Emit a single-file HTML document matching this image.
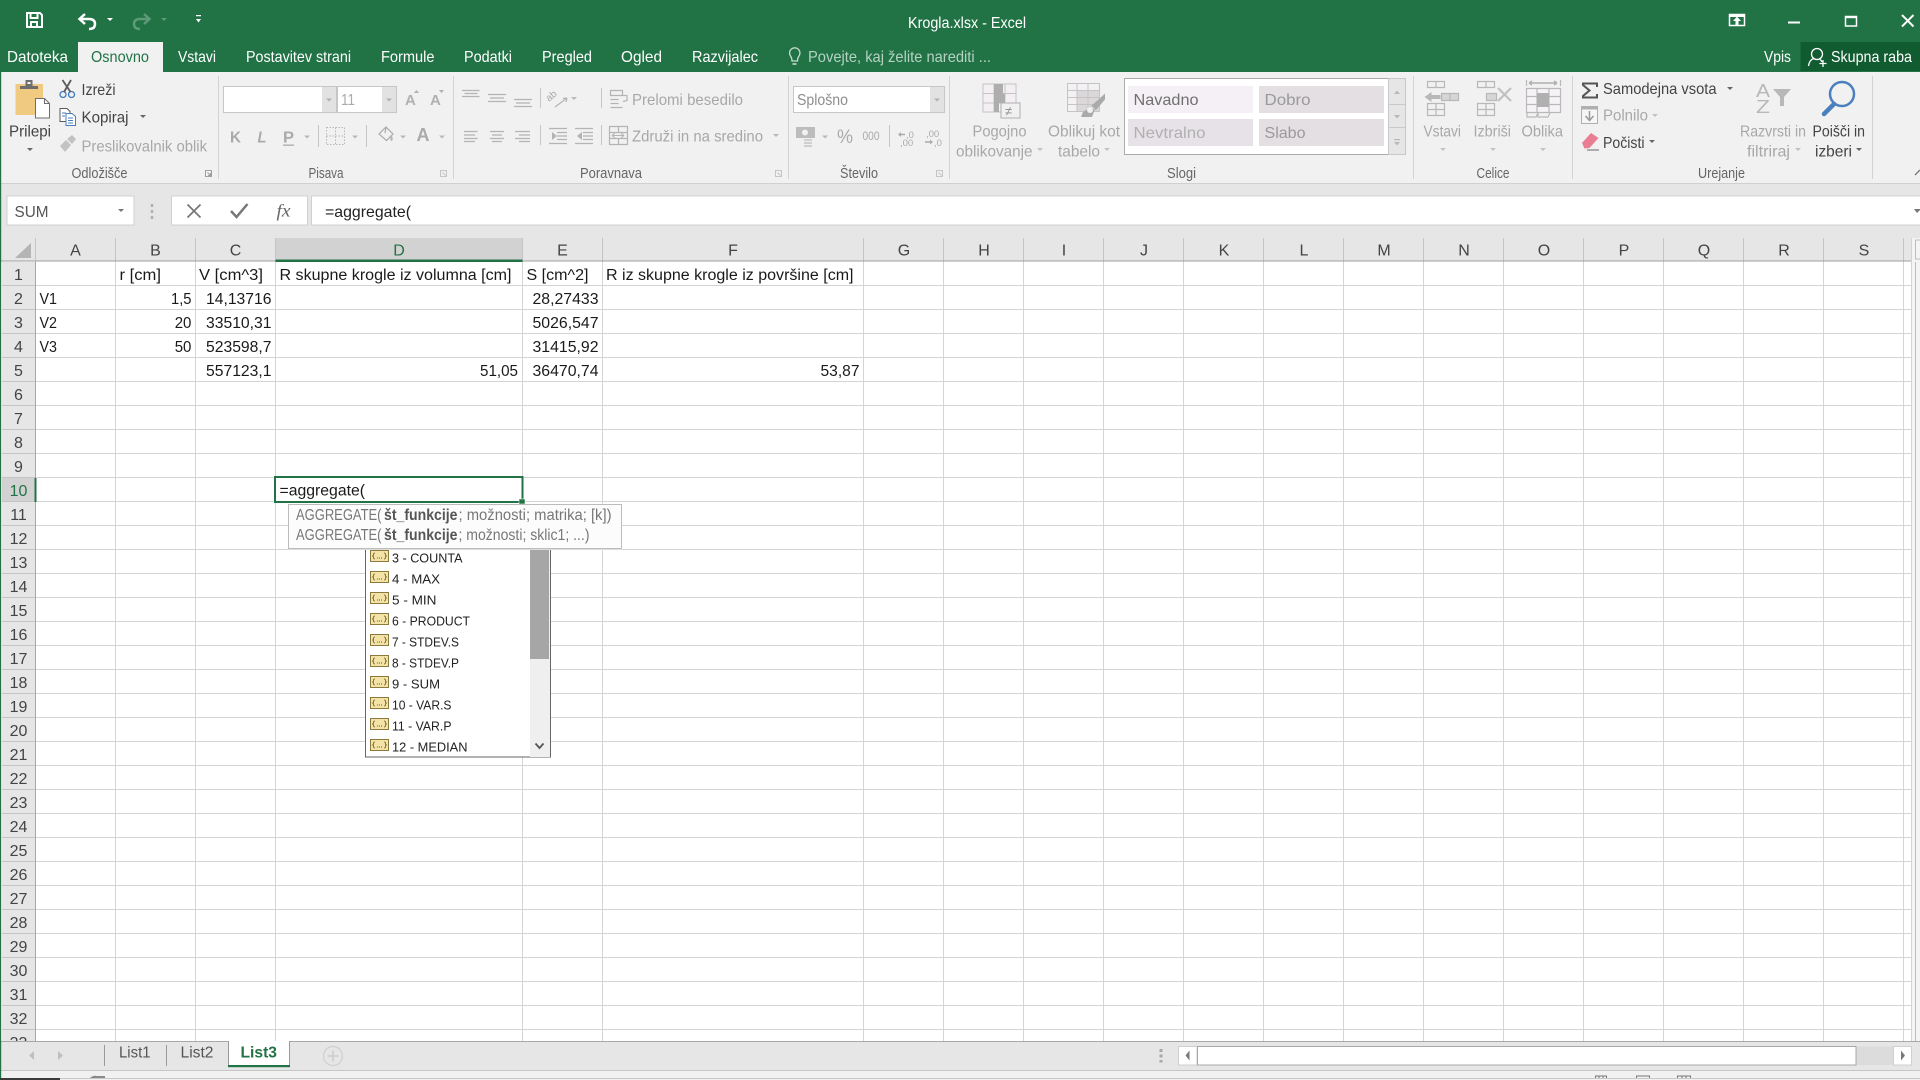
<!DOCTYPE html>
<html><head><meta charset="utf-8"><title>Krogla.xlsx - Excel</title>
<style>
html,body{margin:0;padding:0;width:1920px;height:1080px;overflow:hidden;background:#fff}
svg{display:block;position:absolute;left:0;top:0}
text{font-family:"Liberation Sans",sans-serif;white-space:pre}
.w{fill:#fff;font-size:16px}
.r{fill:#595959;font-size:16px}
.d{fill:#a8a8a8;font-size:16px}
.g{fill:#666;font-size:14.5px}
.c{fill:#1a1a1a;font-size:15.5px}
.h{fill:#444;font-size:16px;text-anchor:middle}
.n{fill:#444;font-size:16px;text-anchor:middle}
.l{fill:#222;font-size:12.5px}
.tp{fill:#777;font-size:15.5px}
.ic{fill:none;stroke:#b4b4b4;stroke-width:1.2}
.ib{fill:#b4b4b4}
</style></head><body>
<svg width="1920" height="1080" viewBox="0 0 1920 1080" xmlns="http://www.w3.org/2000/svg">
<defs>
<path id="ca" d="M0 0h6l-3 3z"/>
<g id="fn"><rect x=".5" y=".5" width="18" height="11" fill="#f3e3a6" stroke="#8b7a3c"/><path d="M5 3q-1.500 0-1.500 1.500v.8l-1 .7 1 .7v.8q0 1.500 1.500 1.500M14 3q1.500 0 1.500 1.500v.8l1 .7-1 .7v.8q0 1.500-1.500 1.500" fill="none" stroke="#6a5c2a" stroke-width=".8"/><path d="M7 8h1M9 8h1M11 8h1" stroke="#6a5c2a"/></g>
</defs>

<!-- base -->
<rect width="1920" height="1080" fill="#fff"/>
<rect width="1920" height="72" fill="#217346"/>
<rect y="72" width="1920" height="111" fill="#f1f1f1"/>
<rect y="183" width="1920" height="1" fill="#d0d0d0"/>
<rect y="184" width="1920" height="54" fill="#e6e6e6"/>

<!-- title bar -->
<g fill="none" stroke="#fff" stroke-width="2">
<path d="M27 13h13l2 2v12H27z"/><path d="M30.500 13v5h7v-5"/><path d="M31 27v-5h6v5"/>
<path d="M85 14l-5.500 5 5.500 5" stroke-width="2.500"/><path d="M80 19h9q6 0 6 5t-6 5" stroke-width="2.500"/>
</g>
<use href="#ca" x="107" y="18" fill="#fff"/>
<g fill="none" stroke="#5c9a78" stroke-width="2.500"><path d="M144 14l5.500 5-5.500 5"/><path d="M149 19h-9q-6 0-6 5t6 5"/></g>
<use href="#ca" x="161" y="18" fill="#5c9a78"/>
<path d="M196 15h5v1.200h-5zM196 19h5l-2.500 3.500z" fill="#fff"/>
<text class="w" x="908" y="28" textLength="118" lengthAdjust="spacingAndGlyphs" font-size="15">Krogla.xlsx - Excel</text>
<g fill="none" stroke="#fff" stroke-width="1.500"><rect x="1729.500" y="14.500" width="15" height="11"/><rect x="1845.500" y="16.500" width="11" height="9.500"/><path d="M1902 15l11.500 11.500M1913.500 15l-11.500 11.500" stroke-width="2"/></g>
<path d="M1733 21l4-4.500 4 4.500h-2.500v4.500h-3V21z" fill="#fff"/><rect x="1730" y="15" width="14" height="2" fill="#fff"/>
<rect x="1788" y="21.500" width="12" height="2" fill="#fff"/><rect x="1845" y="16" width="12" height="2.200" fill="#fff"/>

<!-- tabs -->
<rect x="78" y="42" width="85" height="30" fill="#f1f1f1"/>
<text class="w" x="7" y="62" textLength="61" lengthAdjust="spacingAndGlyphs">Datoteka</text>
<text x="91" y="62" fill="#217346" font-size="16" textLength="58" lengthAdjust="spacingAndGlyphs">Osnovno</text>
<text class="w" x="178" y="62" textLength="38" lengthAdjust="spacingAndGlyphs">Vstavi</text>
<text class="w" x="246" y="62" textLength="105" lengthAdjust="spacingAndGlyphs">Postavitev strani</text>
<text class="w" x="381" y="62" textLength="53.500" lengthAdjust="spacingAndGlyphs">Formule</text>
<text class="w" x="464" y="62" textLength="48" lengthAdjust="spacingAndGlyphs">Podatki</text>
<text class="w" x="542" y="62" textLength="50" lengthAdjust="spacingAndGlyphs">Pregled</text>
<text class="w" x="621" y="62" textLength="41" lengthAdjust="spacingAndGlyphs">Ogled</text>
<text class="w" x="692" y="62" textLength="66" lengthAdjust="spacingAndGlyphs">Razvijalec</text>
<g fill="none" stroke="#c4dccf" stroke-width="1.300"><path d="M792 61q0-3-1.500-5a5.200 5.200 0 1 1 8.500 0q-1.500 2-1.500 5z"/><path d="M792.500 64h4" stroke-width="1.600"/></g>
<text x="808" y="62" fill="#b5d2c2" font-size="16" textLength="183" lengthAdjust="spacingAndGlyphs">Povejte, kaj želite narediti ...</text>
<text class="w" x="1764" y="62" textLength="27" lengthAdjust="spacingAndGlyphs">Vpis</text>
<rect x="1800.500" y="42" width="119.500" height="29" fill="#105c30"/>
<g fill="none" stroke="#fff" stroke-width="1.300"><circle cx="1817" cy="54" r="5.500"/><path d="M1808.500 66q1-6.500 5.500-7.500M1820 59.500q1.500.8 2 2.500"/><path d="M1823 60v7M1819.500 63.500h7"/></g>
<text class="w" x="1831" y="62" textLength="81" lengthAdjust="spacingAndGlyphs">Skupna raba</text>

<!-- ribbon separators -->
<path d="M218.500 76v103M453.500 76v103M788.500 76v103M949.500 76v103M1413.500 76v103M1572.500 76v103M1872.500 76v103" stroke="#d2d2d2"/>

<!-- clipboard -->
<path d="M15.500 84h27.500v31H15.500z" fill="#f0ca80"/>
<path d="M20 86h18v3H20z" fill="#6e6e6e"/><path d="M25.500 80h7v6h-7z" fill="#6e6e6e"/><rect x="27.500" y="82" width="3" height="2" fill="#f1f1f1"/>
<path d="M35.500 98.500h9l5 5v14.500h-14z" fill="#fff" stroke="#6e6e6e"/><path d="M44.500 98.500v5h5" fill="none" stroke="#6e6e6e"/>
<text class="r" x="9" y="136.500" textLength="42" lengthAdjust="spacingAndGlyphs" style="fill:#444">Prilepi</text>
<use href="#ca" x="27" y="148" fill="#666"/>
<g fill="none"><circle cx="63" cy="94.500" r="3" stroke="#3f7cc0" stroke-width="1.300"/><circle cx="71.500" cy="94.500" r="3" stroke="#3f7cc0" stroke-width="1.300"/><path d="M64 92L71 80M70.500 92L62.500 80" stroke="#5a5a5a" stroke-width="1.800"/></g>
<text class="r" x="81.500" y="95" textLength="34" lengthAdjust="spacingAndGlyphs" style="fill:#444">Izreži</text>
<g fill="#fff" stroke="#5a5a5a"><path d="M60 108.500h7l3 3v10H60z"/><path d="M66 113.500h6l3.500 3v9H66z" stroke="#4a7ebb"/></g><path d="M62 113h4M62 116h3M68 118h5M68 120.500h5M68 123h5" stroke="#4a7ebb"/>
<text class="r" x="81.500" y="122.500" textLength="47" lengthAdjust="spacingAndGlyphs" style="fill:#444">Kopiraj</text>
<use href="#ca" x="140" y="115" fill="#666"/>
<path d="M60 146l6-6 5 5-6 7zM67 139l5-4 4 4-4 5z" fill="#c2c2c2"/>
<text class="d" x="81.500" y="151.500" textLength="125.500" lengthAdjust="spacingAndGlyphs">Preslikovalnik oblik</text>
<text class="g" x="71.500" y="178" textLength="56" lengthAdjust="spacingAndGlyphs">Odložišče</text>
<path d="M205.500 170.500h6v6h-6zM207.500 172.500l3 3M210.500 173v2.500H208" fill="none" stroke="#8a8a8a" stroke-width=".8"/>

<!-- font -->
<rect x="223.500" y="86.500" width="113" height="26" fill="#fff" stroke="#c6c6c6"/><rect x="322" y="87" width="14" height="25" fill="#e2e2e2"/>
<rect x="337.500" y="86.500" width="59" height="26" fill="#fff" stroke="#c6c6c6"/><rect x="382" y="87" width="14" height="25" fill="#e2e2e2"/>
<use href="#ca" x="326" y="98.500" fill="#b0b0b0"/><use href="#ca" x="386" y="98.500" fill="#b0b0b0"/>
<text x="341" y="105" font-size="15.500" fill="#ababab" textLength="14" lengthAdjust="spacingAndGlyphs">11</text>
<text x="405" y="105" font-size="15" font-weight="bold" fill="#b0b0b0">A</text><path d="M414 93l2.500-3 2.500 3z" fill="#b0b0b0"/>
<text x="430" y="105" font-size="15" font-weight="bold" fill="#b0b0b0">A</text><path d="M439 90l2.500 3 2.500-3z" fill="#b0b0b0"/>
<text x="230" y="142.500" font-size="16" font-weight="bold" fill="#aaa" textLength="11" lengthAdjust="spacingAndGlyphs">K</text>
<text x="257.500" y="142.500" font-size="16" font-weight="bold" font-style="italic" fill="#aaa" textLength="9" lengthAdjust="spacingAndGlyphs">L</text>
<text x="283" y="142.500" font-size="16" font-weight="bold" fill="#aaa" textLength="11" lengthAdjust="spacingAndGlyphs">P</text><rect x="283" y="144.500" width="11" height="1.300" fill="#aaa"/>
<use href="#ca" x="304" y="135.500" fill="#b8b8b8"/>
<path d="M318.500 125v22M366.500 125v22" stroke="#c6c6c6"/>
<path d="M326.500 127.500h18v17h-18zM335.500 127.500v17M326.500 136h18" fill="none" stroke="#b8b8b8" stroke-dasharray="1.500 1.500"/>
<use href="#ca" x="352" y="135.500" fill="#b8b8b8"/>
<path d="M379 134l7-7 7 7-6.500 6.500zM386 127l-1 6" fill="none" stroke="#ababab" stroke-width="1.200"/><path d="M391 135q3 3 1 6-3 0-1-6z" fill="#b8b8b8"/>
<use href="#ca" x="400" y="135.500" fill="#b8b8b8"/>
<text x="416.500" y="141" font-size="18" font-weight="bold" fill="#aaa" textLength="13" lengthAdjust="spacingAndGlyphs">A</text>
<use href="#ca" x="439" y="135.500" fill="#b8b8b8"/>
<text class="g" x="308.500" y="178" textLength="35" lengthAdjust="spacingAndGlyphs">Pisava</text>
<path d="M440.500 170.500h6v6h-6zM442.500 172.500l3 3" fill="none" stroke="#b8b8b8" stroke-width=".8"/>

<!-- alignment -->
<g class="ic" stroke="#b4b4b4" fill="none">
<path d="M462 90.500h17.500M464.500 93.500h13M462 96.500h17.500"/>
<path d="M488 94.500h18M490 98h14M488 101.500h18"/>
<path d="M514 99.500h18M516 103h14M514 106.500h18"/>
<path d="M464 131.500h13.500M464 135h11M464 138.500h13.500M464 141.500h11"/>
<path d="M490 131.500h14M492 135h10M490 138.500h14M492 141.500h10"/>
<path d="M515 131.500h15M519 135h11M515 138.500h15M519 141.500h11"/>
<path d="M549 128.500h18M557 132.500h10M557 136h10M557 139.500h10M549 143.500h18"/>
<path d="M575 128.500h18M583 132.500h10M583 136h10M583 139.500h10M575 143.500h18"/>
<path d="M610.500 90.500h12v5h-12zM610.500 99.500h8M610.500 103.500h8M610.500 107.500h12M623 95.500h4v5l-4 1"/>
<path d="M609.500 126.500h18v18h-18zM609.500 132.500h18M609.500 138.500h18M618.500 126.500v6M618.500 138.500v6"/>
<path d="M555 107l12-9M567 98l-4 .5M567 98l-1 4"/>
</g>
<text x="0" y="0" font-size="10" fill="#aaa" transform="translate(549 102) rotate(-40)">ab</text>
<path d="M557 136l-5-4v8zM577 136l5-4v8z" fill="#b4b4b4"/><path d="M612 135.500h12M612 135.500l3-2.500M612 135.500l3 2.500M624 135.500l-3-2.500M624 135.500l-3 2.500" stroke="#b4b4b4" fill="none"/>
<use href="#ca" x="571" y="97" fill="#b8b8b8"/>
<path d="M540.500 88v20M540.500 125v20M601.500 88v20M601.500 125v20" stroke="#c6c6c6"/>
<text class="d" x="632" y="105" textLength="111" lengthAdjust="spacingAndGlyphs">Prelomi besedilo</text>
<text class="d" x="632" y="141.500" textLength="131" lengthAdjust="spacingAndGlyphs">Združi in na sredino</text>
<use href="#ca" x="773" y="134" fill="#b8b8b8"/>
<text class="g" x="580" y="178" textLength="62" lengthAdjust="spacingAndGlyphs">Poravnava</text>
<path d="M775.500 170.500h6v6h-6zM777.500 172.500l3 3" fill="none" stroke="#b8b8b8" stroke-width=".8"/>

<!-- number -->
<rect x="793.500" y="86.500" width="151" height="26" fill="#fff" stroke="#c6c6c6"/><rect x="930" y="87" width="14" height="25" fill="#e2e2e2"/>
<use href="#ca" x="934" y="98.500" fill="#b0b0b0"/>
<text x="797" y="105" font-size="16" fill="#8e8e8e" textLength="51" lengthAdjust="spacingAndGlyphs">Splošno</text>
<rect x="796" y="127" width="19" height="11" fill="#bcbcbc"/><circle cx="805" cy="132.500" r="3" fill="#f1f1f1"/><path d="M804 140h8M804 143h8M804 146h8" stroke="#c4c4c4" stroke-width="1.500"/>
<use href="#ca" x="822" y="135.500" fill="#b8b8b8"/>
<text x="837" y="143" font-size="19" fill="#aaa" textLength="16" lengthAdjust="spacingAndGlyphs">%</text>
<text x="862.500" y="140" font-size="11.500" fill="#aaa" textLength="17" lengthAdjust="spacingAndGlyphs">000</text>
<path d="M889.500 125v22" stroke="#c6c6c6"/>
<text x="906" y="138" font-size="9.500" fill="#aaa">,0</text><text x="900" y="146" font-size="9.500" fill="#aaa">,00</text><path d="M898 134.500l3-2.500v1.800h4v1.400h-4v1.800z" fill="#aaa"/>
<text x="926" y="137" font-size="9.500" fill="#aaa">,00</text><text x="934" y="146" font-size="9.500" fill="#aaa">,0</text><path d="M933 142l-3-2.500v1.800h-5v1.400h5v1.800z" fill="#aaa"/>
<text class="g" x="840" y="178" textLength="38" lengthAdjust="spacingAndGlyphs">Število</text>
<path d="M936.500 170.500h6v6h-6zM938.500 172.500l3 3" fill="none" stroke="#b8b8b8" stroke-width=".8"/>

<!-- conditional -->
<rect x="983" y="84" width="33" height="28" fill="#f3eff3" stroke="#c4c4c4"/>
<path d="M994 84v28M1005 84v28M983 93.500h33M983 103h33" stroke="#c4c4c4" fill="none"/>
<path d="M994 84h9v10h-9zM994 94h11v9h-11zM994 103h5v9h-5z" fill="#aeaeae"/>
<rect x="1001" y="103" width="19" height="15" fill="#f1f1f1" stroke="#aeaeae"/>
<text x="1005" y="115.500" font-size="13" fill="#8e8e8e">≠</text>
<text class="d" x="972.500" y="136.500" textLength="54" lengthAdjust="spacingAndGlyphs">Pogojno</text>
<text class="d" x="956" y="156.500" textLength="76.500" lengthAdjust="spacingAndGlyphs">oblikovanje</text>
<use href="#ca" x="1037" y="148" fill="#c2c2c2"/>
<rect x="1067.500" y="83.500" width="32" height="28" fill="#f3f1f3" stroke="#c4c4c4"/>
<rect x="1077" y="90" width="22" height="21" fill="#dcd8da"/>
<path d="M1067.500 90.500h32M1067.500 97.500h32M1067.500 104.500h32M1077 83.500v28M1088 83.500v28" stroke="#c4c4c4" fill="none"/>
<path d="M1099 99l6-5.500v6L1096 110l-6-3zM1092 106l-9 6-2 5h11l3-8z" fill="#aaa"/><circle cx="1090" cy="110" r="3" fill="#f1f1f1"/>
<text class="d" x="1048" y="136.500" textLength="72" lengthAdjust="spacingAndGlyphs">Oblikuj kot</text>
<text class="d" x="1058" y="156.500" textLength="42" lengthAdjust="spacingAndGlyphs">tabelo</text>
<use href="#ca" x="1104" y="148" fill="#c2c2c2"/>

<!-- styles -->
<rect x="1124.500" y="78.500" width="281" height="76" fill="#fff" stroke="#ababab"/>
<rect x="1128" y="86" width="125" height="27" fill="#f5f0f5"/>
<rect x="1259" y="86" width="125" height="27" fill="#e4dfe3"/>
<rect x="1128" y="119" width="125" height="27" fill="#e7e2e7"/>
<rect x="1259" y="119" width="125" height="27" fill="#e4dfe3"/>
<text x="1133.500" y="105" font-size="16" fill="#707070" textLength="65" lengthAdjust="spacingAndGlyphs">Navadno</text>
<text x="1264.500" y="105" font-size="16" fill="#9a9a9a" textLength="46" lengthAdjust="spacingAndGlyphs">Dobro</text>
<text x="1133.500" y="138" font-size="16" fill="#b0b0b0" textLength="72" lengthAdjust="spacingAndGlyphs">Nevtralno</text>
<text x="1264.500" y="138" font-size="16" fill="#9a9a9a" textLength="41" lengthAdjust="spacingAndGlyphs">Slabo</text>
<rect x="1388.500" y="78.500" width="17" height="76" fill="#e6e6e6" stroke="#c8c8c8"/><path d="M1388.500 104.500h17M1388.500 127.500h17" stroke="#c8c8c8"/>
<path d="M1394 94l3-3.500 3 3.500zM1394 115h6l-3 3.500zM1394 140h6M1394 142h6l-3 3.500z" fill="#b8b8b8" stroke="none"/><rect x="1394" y="139" width="6" height="1.200" fill="#b8b8b8"/>
<text class="g" x="1167" y="178" textLength="29" lengthAdjust="spacingAndGlyphs">Slogi</text>

<!-- cells -->
<g fill="none" stroke="#b8b8b8" stroke-width="1.200">
<path d="M1427.500 81.500h17v6h-17zM1436 81.500v6"/><path d="M1441.500 93.500h17v7h-17zM1450 93.500v7" fill="#d6d6d6"/><path d="M1427.500 103.500h17v12h-17zM1436 103.500v12M1427.500 109.500h17"/>
<path d="M1477.500 81.500h17v6h-17zM1486 81.500v6"/><path d="M1486.500 93.500h10v7h-10z" fill="#d6d6d6"/><path d="M1477.500 103.500h17v12h-17zM1486 103.500v12M1477.500 109.500h17"/>
<path d="M1498 88l13 13M1511 88l-13 13" stroke-width="2.200" stroke="#c0c0c0"/>
<path d="M1526.500 88.500h34v24h-34zM1537 88.500v24M1549 88.500v24M1526.500 96.500h34M1526.500 104.500h34" fill="#f6f3f6"/><path d="M1527 113v4h9l2-4M1538 113v4h10l2-4"/>
<path d="M1526.500 80v6M1560.500 80v6"/><path d="M1529 83h28M1529 83l3-2M1529 83l3 2M1557 83l-3-2M1557 83l-3 2" stroke-width="1.500" stroke="#b0b0b0"/>
</g>
<path d="M1424.500 97l7-5v3h9v4h-9v3z" fill="#b8b8b8"/>
<rect x="1537" y="93" width="12" height="14" fill="#b0b0b0"/>
<text class="d" x="1423.500" y="136.500" textLength="37.500" lengthAdjust="spacingAndGlyphs">Vstavi</text>
<text class="d" x="1473.500" y="136.500" textLength="37.500" lengthAdjust="spacingAndGlyphs">Izbriši</text>
<text class="d" x="1521.500" y="136.500" textLength="41.500" lengthAdjust="spacingAndGlyphs">Oblika</text>
<use href="#ca" x="1440" y="148" fill="#c2c2c2"/><use href="#ca" x="1490" y="148" fill="#c2c2c2"/><use href="#ca" x="1540" y="148" fill="#c2c2c2"/>
<text class="g" x="1476.500" y="178" textLength="33" lengthAdjust="spacingAndGlyphs">Celice</text>

<!-- editing -->
<path d="M1597 87v-3.500h-14v1.500l6.500 5.500-6.500 5.500v1.500h14V94" fill="none" stroke="#555" stroke-width="2"/>
<text class="r" x="1603" y="94" textLength="113.500" lengthAdjust="spacingAndGlyphs" style="fill:#444">Samodejna vsota</text>
<use href="#ca" x="1727" y="87" fill="#666"/>
<rect x="1581.500" y="106.500" width="16" height="17" fill="#f6f6f6" stroke="#b0b0b0"/><rect x="1581.500" y="106.500" width="16" height="3" fill="#b0b0b0"/><path d="M1589.500 111v9M1585.500 116l4 4.500 4-4.500" fill="none" stroke="#9a9a9a" stroke-width="1.500"/>
<text class="d" x="1603" y="120.500" textLength="45" lengthAdjust="spacingAndGlyphs">Polnilo</text>
<use href="#ca" x="1652" y="114" fill="#c2c2c2"/>
<path d="M1582 143l9-10 7.500 5-9 10-5 .5z" fill="#e87d93"/><path d="M1587 150h12" stroke="#666"/>
<text class="r" x="1603" y="148" textLength="41.500" lengthAdjust="spacingAndGlyphs" style="fill:#444">Počisti</text>
<use href="#ca" x="1649" y="140" fill="#666"/>
<text x="1756" y="97" font-size="18" fill="#b8b8b8" textLength="14" lengthAdjust="spacingAndGlyphs">A</text>
<text x="1756" y="113" font-size="18" fill="#b8b8b8" textLength="14" lengthAdjust="spacingAndGlyphs">Z</text>
<path d="M1773 89h18l-7 8v9h-4v-9z" fill="#b8b8b8"/>
<text class="d" x="1740" y="136.500" textLength="66" lengthAdjust="spacingAndGlyphs">Razvrsti in</text>
<text class="d" x="1747" y="156.500" textLength="43" lengthAdjust="spacingAndGlyphs">filtriraj</text>
<use href="#ca" x="1795" y="148" fill="#c2c2c2"/>
<circle cx="1842" cy="94" r="12" fill="none" stroke="#4a80bd" stroke-width="2.500"/>
<path d="M1834 104l-10 10" stroke="#4a80bd" stroke-width="4.500" stroke-linecap="round"/>
<text class="r" x="1812.500" y="136.500" textLength="52.500" lengthAdjust="spacingAndGlyphs" style="fill:#444">Poišči in</text>
<text class="r" x="1815" y="156.500" textLength="37" lengthAdjust="spacingAndGlyphs" style="fill:#444">izberi</text>
<use href="#ca" x="1856" y="148" fill="#666"/>
<text class="g" x="1698" y="178" textLength="47" lengthAdjust="spacingAndGlyphs">Urejanje</text>
<path d="M1915 175l5-5" stroke="#777" stroke-width="1.300"/>

<!-- formula bar -->
<rect x="7" y="196" width="127" height="29" fill="#fff" stroke="#d0d0d0"/>
<text x="14.500" y="217" font-size="16" fill="#555" textLength="34" lengthAdjust="spacingAndGlyphs">SUM</text>
<use href="#ca" x="118" y="209" fill="#777"/>
<path d="M152 204v3M152 210v3M152 216v3" stroke="#b0b0b0" stroke-width="2.500"/>
<rect x="171.500" y="196" width="136" height="29" fill="#fff" stroke="#d0d0d0"/>
<rect x="311.500" y="196" width="1610" height="29" fill="#fff" stroke="#d0d0d0"/>
<path d="M187.500 204.500l13 13M200.500 204.500l-13 13" stroke="#777" stroke-width="1.800" fill="none"/>
<path d="M231 211l5.500 6 11-13" stroke="#777" stroke-width="2.500" fill="none"/>
<text x="276.500" y="216.500" font-size="18" font-style="italic" fill="#666" style="font-family:'Liberation Serif',serif" textLength="14" lengthAdjust="spacingAndGlyphs">fx</text>
<text x="325" y="217" font-size="16" fill="#222" textLength="86" lengthAdjust="spacingAndGlyphs">=aggregate(</text>
<path d="M1914 209h6v1l-3 3z" fill="#777"/>

<!-- headers -->
<rect y="238" width="1912" height="23" fill="#e6e6e6"/>
<rect x="275.500" y="238" width="247" height="23" fill="#d2d2d2"/>
<rect x="2" y="262" width="34" height="779" fill="#e6e6e6"/>
<rect x="2" y="478" width="34" height="24" fill="#d2d2d2"/>
<path d="M31 243v15H15z" fill="#b4b4b4"/>
<path d="M35.500 238v24M115.500 238v24M195.500 238v24M275.500 238v24M522.500 238v24M602.500 238v24M863.500 238v24M943.500 238v24M1023.500 238v24M1103.500 238v24M1183.500 238v24M1263.500 238v24M1343.500 238v24M1423.500 238v24M1503.500 238v24M1583.500 238v24M1663.500 238v24M1743.500 238v24M1823.500 238v24M1903.500 238v24" stroke="#c4c4c4"/>
<rect y="260.500" width="1912" height="1" fill="#9f9f9f"/>
<rect x="275.500" y="259.500" width="247" height="2.500" fill="#217346"/>

<!-- grid -->
<path d="M115.500 262V1041M195.500 262V1041M275.500 262V1041M522.500 262V1041M602.500 262V1041M863.500 262V1041M943.500 262V1041M1023.500 262V1041M1103.500 262V1041M1183.500 262V1041M1263.500 262V1041M1343.500 262V1041M1423.500 262V1041M1503.500 262V1041M1583.500 262V1041M1663.500 262V1041M1743.500 262V1041M1823.500 262V1041M1903.500 262V1041M1911.500 238V1041" stroke="#d4d4d4" fill="none"/>
<path d="M36 285.500H1911M36 309.500H1911M36 333.500H1911M36 357.500H1911M36 381.500H1911M36 405.500H1911M36 429.500H1911M36 453.500H1911M36 477.500H1911M36 501.500H1911M36 525.500H1911M36 549.500H1911M36 573.500H1911M36 597.500H1911M36 621.500H1911M36 645.500H1911M36 669.500H1911M36 693.500H1911M36 717.500H1911M36 741.500H1911M36 765.500H1911M36 789.500H1911M36 813.500H1911M36 837.500H1911M36 861.500H1911M36 885.500H1911M36 909.500H1911M36 933.500H1911M36 957.500H1911M36 981.500H1911M36 1005.500H1911M36 1029.500H1911" stroke="#d4d4d4" fill="none"/>
<path d="M2 285.500H35M2 309.500H35M2 333.500H35M2 357.500H35M2 381.500H35M2 405.500H35M2 429.500H35M2 453.500H35M2 477.500H35M2 501.500H35M2 525.500H35M2 549.500H35M2 573.500H35M2 597.500H35M2 621.500H35M2 645.500H35M2 669.500H35M2 693.500H35M2 717.500H35M2 741.500H35M2 765.500H35M2 789.500H35M2 813.500H35M2 837.500H35M2 861.500H35M2 885.500H35M2 909.500H35M2 933.500H35M2 957.500H35M2 981.500H35M2 1005.500H35M2 1029.500H35" stroke="#c4c4c4" fill="none"/>
<path d="M35.500 262V1041" stroke="#a8a8a8"/>
<rect x="34.500" y="478" width="2" height="24" fill="#217346"/>
<rect x="1912" y="238" width="8" height="803" fill="#f4f4f4"/>
<path d="M1915.500 240H1920M1915.500 240V259H1920M1915.500 262V1041" stroke="#bdbdbd" fill="none"/>

<!-- column letters -->
<g>
<text class="h" x="75.500" y="255.500">A</text><text class="h" x="155.500" y="255.500">B</text><text class="h" x="235.500" y="255.500">C</text>
<text class="h" x="399" y="255.500" style="fill:#217346">D</text>
<text class="h" x="562.500" y="255.500">E</text><text class="h" x="733" y="255.500">F</text><text class="h" x="904" y="255.500">G</text>
<text class="h" x="984" y="255.500">H</text><text class="h" x="1064" y="255.500">I</text><text class="h" x="1144" y="255.500">J</text>
<text class="h" x="1224" y="255.500">K</text><text class="h" x="1304" y="255.500">L</text><text class="h" x="1384" y="255.500">M</text>
<text class="h" x="1464" y="255.500">N</text><text class="h" x="1544" y="255.500">O</text><text class="h" x="1624" y="255.500">P</text>
<text class="h" x="1704" y="255.500">Q</text><text class="h" x="1784" y="255.500">R</text><text class="h" x="1864" y="255.500">S</text>
</g>
<!-- row numbers -->
<g>
<text class="n" x="18.500" y="280">1</text><text class="n" x="18.500" y="304">2</text><text class="n" x="18.500" y="328">3</text><text class="n" x="18.500" y="352">4</text>
<text class="n" x="18.500" y="376">5</text><text class="n" x="18.500" y="400">6</text><text class="n" x="18.500" y="424">7</text><text class="n" x="18.500" y="448">8</text>
<text class="n" x="18.500" y="472">9</text><text class="n" x="18.500" y="496" style="fill:#217346">10</text><text class="n" x="18.500" y="520">11</text><text class="n" x="18.500" y="544">12</text>
<text class="n" x="18.500" y="568">13</text><text class="n" x="18.500" y="592">14</text><text class="n" x="18.500" y="616">15</text><text class="n" x="18.500" y="640">16</text>
<text class="n" x="18.500" y="664">17</text><text class="n" x="18.500" y="688">18</text><text class="n" x="18.500" y="712">19</text><text class="n" x="18.500" y="736">20</text>
<text class="n" x="18.500" y="760">21</text><text class="n" x="18.500" y="784">22</text><text class="n" x="18.500" y="808">23</text><text class="n" x="18.500" y="832">24</text>
<text class="n" x="18.500" y="856">25</text><text class="n" x="18.500" y="880">26</text><text class="n" x="18.500" y="904">27</text><text class="n" x="18.500" y="928">28</text>
<text class="n" x="18.500" y="952">29</text><text class="n" x="18.500" y="976">30</text><text class="n" x="18.500" y="1000">31</text><text class="n" x="18.500" y="1024">32</text>
<text class="n" x="18.500" y="1048">33</text>
</g>

<!-- cells -->
<text class="c" x="119.500" y="280" textLength="41.500" lengthAdjust="spacingAndGlyphs">r [cm]</text>
<text class="c" x="199" y="280" textLength="64" lengthAdjust="spacingAndGlyphs">V [cm^3]</text>
<text class="c" x="279.500" y="280" textLength="232" lengthAdjust="spacingAndGlyphs">R skupne krogle iz volumna [cm]</text>
<text class="c" x="526.500" y="280" textLength="62" lengthAdjust="spacingAndGlyphs">S [cm^2]</text>
<text class="c" x="606" y="280" textLength="247.500" lengthAdjust="spacingAndGlyphs">R iz skupne krogle iz površine [cm]</text>
<text class="c" x="39.500" y="304" textLength="17.500" lengthAdjust="spacingAndGlyphs">V1</text>
<text class="c" x="39.500" y="328" textLength="17.500" lengthAdjust="spacingAndGlyphs">V2</text>
<text class="c" x="39.500" y="352" textLength="17.500" lengthAdjust="spacingAndGlyphs">V3</text>
<text class="c" x="171" y="304" textLength="20.500" lengthAdjust="spacingAndGlyphs">1,5</text>
<text class="c" x="174.700" y="328" textLength="16.700" lengthAdjust="spacingAndGlyphs">20</text>
<text class="c" x="174.700" y="352" textLength="16.700" lengthAdjust="spacingAndGlyphs">50</text>
<text class="c" x="206" y="304" textLength="65.500" lengthAdjust="spacingAndGlyphs">14,13716</text>
<text class="c" x="206" y="328" textLength="65.500" lengthAdjust="spacingAndGlyphs">33510,31</text>
<text class="c" x="206" y="352" textLength="65.500" lengthAdjust="spacingAndGlyphs">523598,7</text>
<text class="c" x="206" y="376" textLength="65.500" lengthAdjust="spacingAndGlyphs">557123,1</text>
<text class="c" x="480" y="376" textLength="38" lengthAdjust="spacingAndGlyphs">51,05</text>
<text class="c" x="532.500" y="304" textLength="66" lengthAdjust="spacingAndGlyphs">28,27433</text>
<text class="c" x="532.500" y="328" textLength="66" lengthAdjust="spacingAndGlyphs">5026,547</text>
<text class="c" x="532.500" y="352" textLength="66" lengthAdjust="spacingAndGlyphs">31415,92</text>
<text class="c" x="532.500" y="376" textLength="66" lengthAdjust="spacingAndGlyphs">36470,74</text>
<text class="c" x="820.500" y="376" textLength="39" lengthAdjust="spacingAndGlyphs">53,87</text>

<!-- active cell -->
<rect x="275" y="477" width="247.500" height="25" fill="#fff" stroke="#217346" stroke-width="2"/>
<rect x="519" y="499" width="6" height="5" fill="#217346" stroke="#fff" stroke-width=".5"/>
<text class="c" x="279.500" y="495.500" textLength="85.500" lengthAdjust="spacingAndGlyphs">=aggregate(</text>

<!-- autocomplete list -->
<rect x="365.500" y="540" width="185" height="217" fill="#fff" stroke="#666"/>
<rect x="530" y="541" width="20" height="216" fill="#efefef"/>
<rect x="530" y="541" width="19" height="118" fill="#a6a6a6"/>
<path d="M535.500 743.500l4 4.500 4-4.500" fill="none" stroke="#555" stroke-width="1.800"/>
<use href="#fn" x="370" y="550"/><use href="#fn" x="370" y="571"/><use href="#fn" x="370" y="592"/><use href="#fn" x="370" y="613"/><use href="#fn" x="370" y="634"/><use href="#fn" x="370" y="655"/><use href="#fn" x="370" y="676"/><use href="#fn" x="370" y="697"/><use href="#fn" x="370" y="718"/><use href="#fn" x="370" y="739"/>
<text class="l" x="392" y="562.500" textLength="70.500" lengthAdjust="spacingAndGlyphs">3 - COUNTA</text>
<text class="l" x="392" y="583.500" textLength="48" lengthAdjust="spacingAndGlyphs">4 - MAX</text>
<text class="l" x="392" y="604.500" textLength="44.500" lengthAdjust="spacingAndGlyphs">5 - MIN</text>
<text class="l" x="392" y="625.500" textLength="78" lengthAdjust="spacingAndGlyphs">6 - PRODUCT</text>
<text class="l" x="392" y="646.500" textLength="67" lengthAdjust="spacingAndGlyphs">7 - STDEV.S</text>
<text class="l" x="392" y="667.500" textLength="67" lengthAdjust="spacingAndGlyphs">8 - STDEV.P</text>
<text class="l" x="392" y="688.500" textLength="48" lengthAdjust="spacingAndGlyphs">9 - SUM</text>
<text class="l" x="392" y="709.500" textLength="59.500" lengthAdjust="spacingAndGlyphs">10 - VAR.S</text>
<text class="l" x="392" y="730.500" textLength="59.500" lengthAdjust="spacingAndGlyphs">11 - VAR.P</text>
<text class="l" x="392" y="751.500" textLength="75.500" lengthAdjust="spacingAndGlyphs">12 - MEDIAN</text>

<!-- tooltip -->
<rect x="288.500" y="504.500" width="333" height="44" fill="#fcfcfc" stroke="#bcbcbc"/>
<rect x="289.500" y="549" width="333" height="1" fill="#dedede"/>
<text class="tp" x="296" y="520" textLength="85.500" lengthAdjust="spacingAndGlyphs">AGGREGATE(</text>
<text class="tp" x="384" y="520" font-weight="bold" textLength="73.500" lengthAdjust="spacingAndGlyphs" style="fill:#555">št_funkcije</text>
<text class="tp" x="458.500" y="520" textLength="153" lengthAdjust="spacingAndGlyphs">; možnosti; matrika; [k])</text>
<text class="tp" x="296" y="540" textLength="85.500" lengthAdjust="spacingAndGlyphs">AGGREGATE(</text>
<text class="tp" x="384" y="540" font-weight="bold" textLength="73.500" lengthAdjust="spacingAndGlyphs" style="fill:#555">št_funkcije</text>
<text class="tp" x="458.500" y="540" textLength="131" lengthAdjust="spacingAndGlyphs">; možnosti; sklic1; ...)</text>

<!-- sheet tabs -->
<rect x="0" y="1041" width="1920" height="29" fill="#e6e6e6"/>
<rect y="1041" width="1920" height="1" fill="#a8a8a8"/>
<path d="M34 1051v9l-5-4.500zM58 1051v9l5-4.500z" fill="#c0c0c0"/>
<path d="M104.500 1045v21M166.500 1045v21" stroke="#9a9a9a"/>
<text x="119" y="1057.500" font-size="16" fill="#555" textLength="31.500" lengthAdjust="spacingAndGlyphs">List1</text>
<text x="180.500" y="1057.500" font-size="16" fill="#555" textLength="33" lengthAdjust="spacingAndGlyphs">List2</text>
<rect x="229" y="1041" width="60" height="25" fill="#fff"/>
<path d="M228.500 1041v25M289.500 1041v25" stroke="#9a9a9a"/>
<rect x="228" y="1065" width="62" height="2.200" fill="#217346"/>
<text x="240.500" y="1057.500" font-size="16" font-weight="bold" fill="#217346" textLength="36.500" lengthAdjust="spacingAndGlyphs">List3</text>
<circle cx="333" cy="1056" r="9.500" fill="none" stroke="#cfcfcf" stroke-width="1.200"/>
<path d="M333 1050.500v11M327.500 1056h11" stroke="#cfcfcf" stroke-width="1.800"/>
<path d="M1161 1049v3M1161 1054.500v3M1161 1060v2.500" stroke="#a8a8a8" stroke-width="3"/>
<rect x="1178.500" y="1046.500" width="733" height="18.500" fill="#dcdcdc"/>
<rect x="1178.500" y="1046.500" width="18.500" height="18.500" fill="#fff" stroke="#cfcfcf"/>
<rect x="1893.500" y="1046.500" width="18" height="18.500" fill="#fff" stroke="#cfcfcf"/>
<rect x="1197.500" y="1046.500" width="658.500" height="18.500" fill="#fff" stroke="#a8a8a8"/>
<path d="M1189.500 1050.500v10l-4-5zM1901 1050.500v10l4-5z" fill="#7a7a7a"/>

<!-- status -->
<rect y="1070" width="1920" height="1" fill="#c6c6c6"/>
<rect y="1071" width="1920" height="9" fill="#f1f1f1"/>
<path d="M90 1078q3-3 7-2h1v2zM98 1076h7v2h-7z" fill="#8a8a8a"/>
<path d="M1595.500 1078v-2h11v2M1599 1076v2M1603 1076v2M1636.500 1078v-2h13v2M1677.500 1078v-2h13v2M1682 1076v2M1686 1076v2" fill="none" stroke="#777"/>
<rect y="1078" width="1920" height="1" fill="#c8c8c8"/>
<rect y="1078" width="60" height="2" fill="#3c3c3c"/>
<rect x="0" y="72" width="1.200" height="1006" fill="#217346"/>
</svg>
</body></html>
